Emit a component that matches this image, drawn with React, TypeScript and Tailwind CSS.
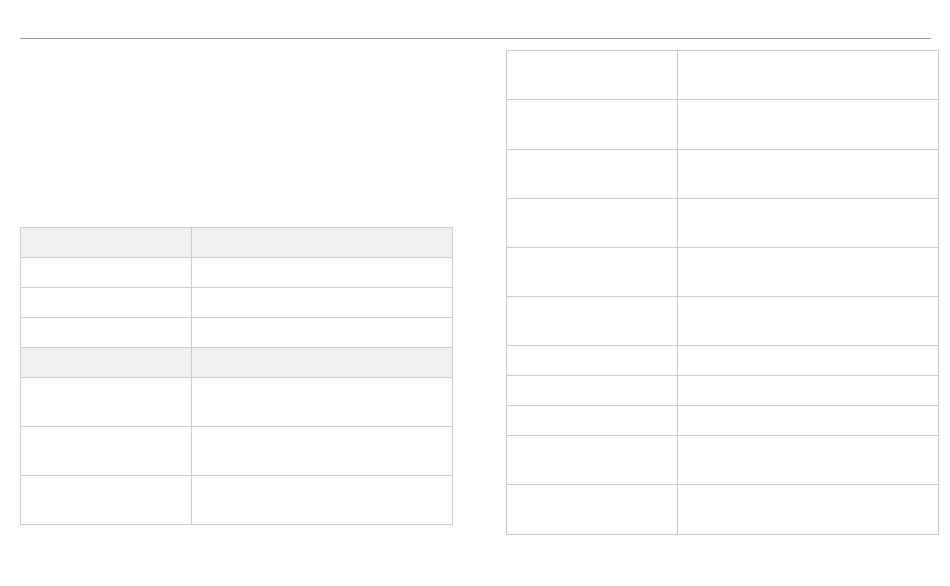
import React from "react";

type Row = { h: string; head?: boolean };

const leftRows: Row[] = [
  { h: "h-[30px]", head: true },
  { h: "h-[30px]" },
  { h: "h-[30px]" },
  { h: "h-[30px]" },
  { h: "h-[30px]", head: true },
  { h: "h-[49px]" },
  { h: "h-[49px]" },
  { h: "h-[49px]" },
];

const rightRows: Row[] = [
  { h: "h-[49px]" },
  { h: "h-[50px]" },
  { h: "h-[49px]" },
  { h: "h-[49px]" },
  { h: "h-[49px]" },
  { h: "h-[49px]" },
  { h: "h-[30px]" },
  { h: "h-[30px]" },
  { h: "h-[30px]" },
  { h: "h-[49px]" },
  { h: "h-[50px]" },
];

const SpecTable = ({ rows }: { rows: Row[] }) => (
  <table className="w-[433px] shrink-0 table-fixed border-collapse text-[13px] text-[#333]">
    <colgroup>
      <col className="w-[171px]" />
      <col />
    </colgroup>
    <tbody>
      {rows.map((row, i) => (
        <tr key={i} className={row.head ? "bg-[#f0f0f0]" : "bg-white"}>
          <td className={`${row.h} border border-[#cccccc] p-0`}></td>
          <td className={`${row.h} border border-[#cccccc] p-0`}></td>
        </tr>
      ))}
    </tbody>
  </table>
);

export default function App() {
  return (
    <div className="min-h-[586px] w-[950px] bg-white px-[20px] pt-[38px] font-['Liberation_Sans',Arial,sans-serif]">
      <div className="h-px w-[911px] bg-[#999999]" />
      <div className="mt-[11px] flex items-start">
        <div className="w-[486px] shrink-0 pt-[177px]">
          <SpecTable rows={leftRows} />
        </div>
        <SpecTable rows={rightRows} />
      </div>
    </div>
  );
}
